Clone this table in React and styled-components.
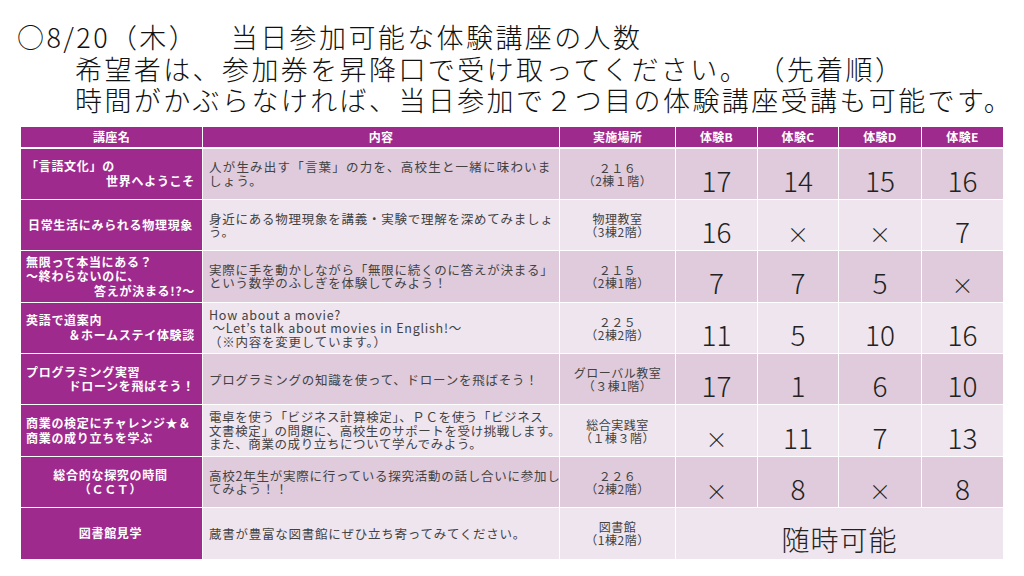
import React from "react";
import styled, { createGlobalStyle } from "styled-components";

const GlobalStyle = createGlobalStyle`
  html, body { margin: 0; padding: 0; background: #ffffff; }
  body { font-family: "Noto Sans CJK JP", "Noto Sans", sans-serif; }
`;

const PURPLE = "#9f2a8e";
const DARK_ROW = "#dfcbdb";
const LIGHT_ROW = "#efe5ee";

const Page = styled.div`
  width: 1024px;
  height: 576px;
  overflow: hidden;
  padding-top: 21px;
  box-sizing: border-box;
`;

const Title = styled.div`
  font-family: "Noto Sans CJK JP", sans-serif;
  font-weight: 300;
  font-size: 27px;
  line-height: 31.5px;
  color: #111;
  white-space: pre;
`;

const TitleLine = styled.div`
  padding-left: ${(p) => (p.$indent ? "75px" : "17px")};
  letter-spacing: ${(p) => p.$spacing || "2.4px"};
`;

const Table = styled.div`
  margin: 11px 0 0 21px;
  width: 982px;
  display: grid;
  grid-template-columns: 181px 356px 115px 81px 80px 82px 81px;
  grid-template-rows: 21px repeat(8, 50.4px);
  column-gap: 1px;
  row-gap: 1px;
  background: #ffffff;
`;

const HeadCell = styled.div`
  background: ${PURPLE};
  color: #fff;
  font-weight: 700;
  font-size: 12px;
  height: 20px;
  align-self: start;
  display: flex;
  align-items: center;
  justify-content: center;
  letter-spacing: 0.3px;
`;

const NameCell = styled.div`
  background: ${PURPLE};
  color: #fff;
  font-weight: 700;
  font-size: 12px;
  line-height: 14.5px;
  letter-spacing: 0.7px;
  padding: 0 7px 0 5px;
  display: flex;
  flex-direction: column;
  justify-content: center;
  white-space: nowrap;
`;

const NameLine = styled.div`
  text-align: ${(p) => p.$align || "left"};
`;

const ContentCell = styled.div`
  background: ${(p) => (p.$alt ? LIGHT_ROW : DARK_ROW)};
  color: #424242;
  font-size: 12.5px;
  line-height: 13.5px;
  letter-spacing: ${(p) => p.$spacing || "0.75px"};
  padding: 0 6px;
  display: flex;
  flex-direction: column;
  justify-content: center;
  white-space: pre;
  position: relative;
  z-index: 1;
`;

const PlaceCell = styled.div`
  background: ${(p) => (p.$alt ? LIGHT_ROW : DARK_ROW)};
  color: #424242;
  font-size: 12px;
  line-height: 13px;
  letter-spacing: 0.5px;
  display: flex;
  flex-direction: column;
  justify-content: center;
  align-items: center;
  white-space: pre;
`;

const CountCell = styled.div`
  background: ${(p) => (p.$alt ? LIGHT_ROW : DARK_ROW)};
  grid-column: span ${(p) => p.$span || 1};
  color: #222;
  font-weight: 300;
  font-size: 28px;
  display: flex;
  align-items: center;
  justify-content: center;
  padding-top: 12px;
  box-sizing: border-box;
  letter-spacing: ${(p) => (p.$span ? "1px" : "0")};
`;

const Cross = styled.span`
  font-size: 22px;
  line-height: 1;
  margin-top: 3px;
`;

const headers = ["講座名", "内容", "実施場所", "体験B", "体験C", "体験D", "体験E"];

const rows = [
  {
    name: [["「言語文化」の", "left"], ["世界へようこそ", "right"]],
    content: ["人が生み出す「言葉」の力を、高校生と一緒に味わいま", "しょう。"],
    spacing: "1.2px",
    place: ["２１６", "（2棟１階）"],
    counts: ["17", "14", "15", "16"],
  },
  {
    name: [["日常生活にみられる物理現象", "center"]],
    content: ["身近にある物理現象を講義・実験で理解を深めてみましょ", "う。"],
    place: ["物理教室", "（3棟2階）"],
    counts: ["16", "×", "×", "7"],
  },
  {
    name: [
      ["無限って本当にある？", "left"],
      ["～終わらないのに、", "left"],
      ["答えが決まる!?～", "right"],
    ],
    content: ["実際に手を動かしながら「無限に続くのに答えが決まる」", "という数学のふしぎを体験してみよう！"],
    place: ["２１５", "（2棟1階）"],
    counts: ["7", "7", "5", "×"],
  },
  {
    name: [["英語で道案内", "left"], ["＆ホームステイ体験談", "right"]],
    content: ["How about a movie?", " ～Let’s talk about movies in English!～", "（※内容を変更しています。）"],
    place: ["２２５", "（2棟2階）"],
    counts: ["11", "5", "10", "16"],
  },
  {
    name: [["プログラミング実習", "left"], ["ドローンを飛ばそう！", "right"]],
    content: ["プログラミングの知識を使って、ドローンを飛ばそう！"],
    place: ["グローバル教室", "（３棟1階）"],
    counts: ["17", "1", "6", "10"],
  },
  {
    name: [["商業の検定にチャレンジ★＆", "left"], ["商業の成り立ちを学ぶ", "left"]],
    content: [
      "電卓を使う「ビジネス計算検定」、ＰＣを使う「ビジネス",
      "文書検定」の問題に、高校生のサポートを受け挑戦します。",
      "また、商業の成り立ちについて学んでみよう。",
    ],
    spacing: "0.6px",
    place: ["総合実践室", "（１棟３階）"],
    counts: ["×", "11", "7", "13"],
  },
  {
    name: [["総合的な探究の時間", "center"], ["（ＣＣＴ）", "center"]],
    content: ["高校2年生が実際に行っている探究活動の話し合いに参加し", "てみよう！！"],
    place: ["２２６", "（2棟2階）"],
    counts: ["×", "8", "×", "8"],
  },
  {
    name: [["図書館見学", "center"]],
    content: ["蔵書が豊富な図書館にぜひ立ち寄ってみてください。"],
    place: ["図書館", "（1棟2階）"],
    counts: null,
  },
];

export default function App() {
  return (
    <Page>
      <GlobalStyle />
      <Title>
        <TitleLine>{"○8/20（木）　  当日参加可能な体験講座の人数"}</TitleLine>
        <TitleLine $indent>{"希望者は、参加券を昇降口で受け取ってください。 （先着順）"}</TitleLine>
        <TitleLine $indent>時間がかぶらなければ、当日参加で２つ目の体験講座受講も可能です。</TitleLine>
      </Title>
      <Table>
        {headers.map((h) => (
          <HeadCell key={h}>{h}</HeadCell>
        ))}
        {rows.map((r, i) => {
          const alt = i % 2 === 1;
          return (
            <React.Fragment key={i}>
              <NameCell>
                {r.name.map(([t, a], j) => (
                  <NameLine key={j} $align={a}>
                    {t}
                  </NameLine>
                ))}
              </NameCell>
              <ContentCell $alt={alt} $spacing={r.spacing}>
                {r.content.map((t, j) => (
                  <div key={j}>{t}</div>
                ))}
              </ContentCell>
              <PlaceCell $alt={alt}>
                {r.place.map((t, j) => (
                  <div key={j}>{t}</div>
                ))}
              </PlaceCell>
              {r.counts ? (
                r.counts.map((c, j) => (
                  <CountCell key={j} $alt={alt}>
                    {c === "×" ? <Cross>×</Cross> : c}
                  </CountCell>
                ))
              ) : (
                <CountCell $alt={alt} $span={4}>
                  随時可能
                </CountCell>
              )}
            </React.Fragment>
          );
        })}
      </Table>
    </Page>
  );
}
